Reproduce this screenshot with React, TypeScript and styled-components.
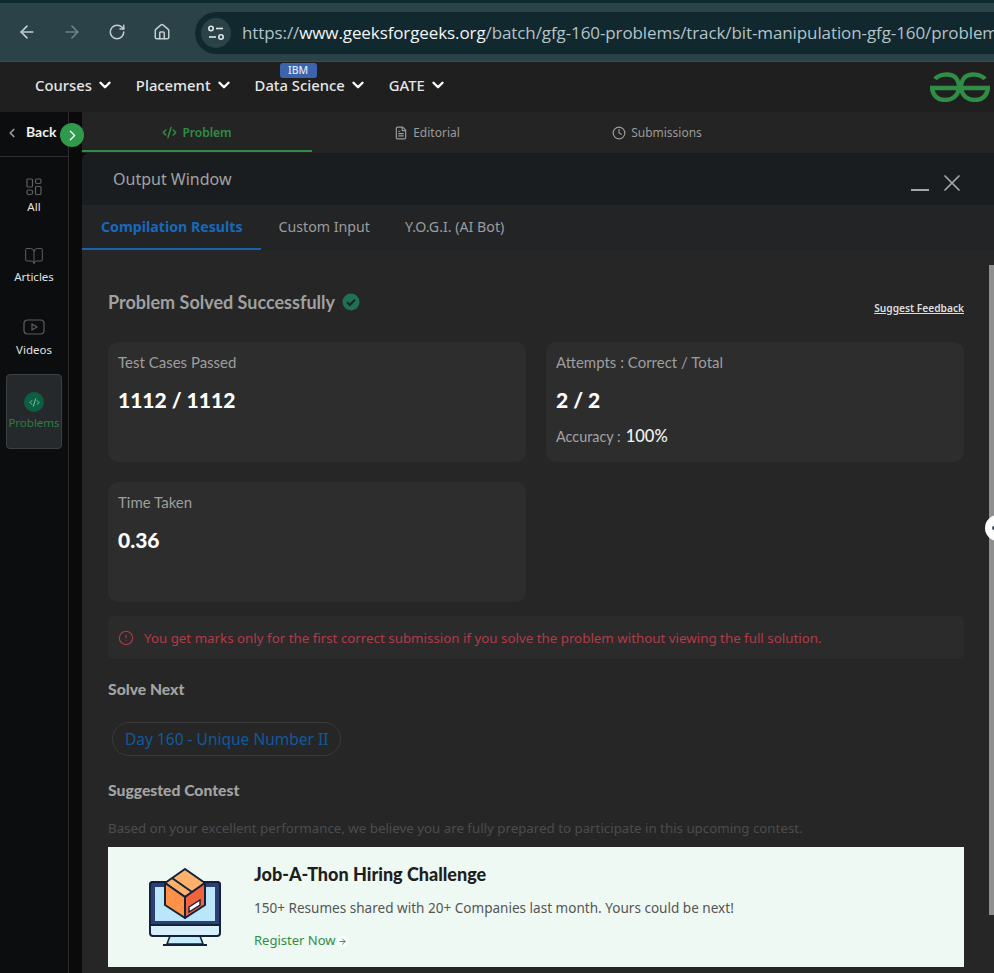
import React from 'react';
import styled, { createGlobalStyle } from 'styled-components';
import { ArrowLeft, ArrowRight, RotateCw, House, ChevronDown, ChevronLeft, ChevronRight, CodeXml, FileText, Clock, X, CircleAlert, BookOpen } from 'lucide-react';

const GlobalStyle = createGlobalStyle`
    html, body {
        margin: 0;
        padding: 0;
        background: #0a0c0d;
    }
    * {
        box-sizing: border-box;
    }
`;

const BODY_FONT = '"Noto Sans", "Open Sans", sans-serif';
const HEAD_FONT = 'Lato, "Noto Sans", sans-serif';

const Page = styled.div`
    position: relative;
    width: 994px;
    height: 973px;
    overflow: hidden;
    display: flex;
    flex-direction: column;
    font-family: ${BODY_FONT};
`;

const BrowserBar = styled.div`
    height: 62px;
    flex: none;
    display: flex;
    align-items: center;
    padding-left: 17px;
    background: #2c4249;
    border-top: 3px solid #0f2a30;
    border-bottom: 1px solid #3b4a4e;
`;

const BrowserButton = styled.span<{ $dim?: boolean; $gap: number }>`
    display: flex;
    margin-right: ${(p) => p.$gap}px;
    color: ${(p) => (p.$dim ? '#6d8086' : '#c2ced1')};
`;

const AddressBar = styled.div`
    flex: 1;
    min-width: 0;
    height: 42px;
    margin-top: 1px;
    display: flex;
    align-items: center;
    gap: 11px;
    padding-left: 6px;
    background: #11282f;
    border-radius: 21px 0 0 21px;
`;

const SiteInfo = styled.span`
    width: 30px;
    height: 30px;
    flex: none;
    display: flex;
    align-items: center;
    justify-content: center;
    border-radius: 50%;
    background: #2c4249;
`;

const Url = styled.div`
    white-space: nowrap;
    overflow: hidden;
    font-size: 17px;
    color: #b4c3c7;
    font-family: "Open Sans", ${BODY_FONT};
    letter-spacing: -0.1px;
    b {
        font-weight: 400;
        color: #f1f5f6;
    }
`;

const NavBar = styled.nav`
    height: 50px;
    flex: none;
    display: flex;
    align-items: center;
    justify-content: space-between;
    padding: 0 4px 0 35px;
    background: #1f1f1f;
`;

const NavList = styled.div`
    display: flex;
    gap: 22px;
    padding-bottom: 5px;
`;

const NavItem = styled.div`
    position: relative;
    display: flex;
    align-items: center;
    gap: 4px;
    font-size: 14.8px;
    font-weight: 500;
    color: #e6e6e6;
`;

const NavBadge = styled.span`
    position: absolute;
    top: -12px;
    left: 25px;
    width: 37px;
    height: 15px;
    border-radius: 3px;
    background: #3e63ad;
    color: #dfe7f5;
    font-size: 10.5px;
    line-height: 15px;
    text-align: center;
`;

const Body = styled.div`
    flex: 1;
    min-height: 0;
    display: flex;
    background: #0a0a0a;
`;

const Sidebar = styled.aside`
    position: relative;
    width: 69px;
    flex: none;
    margin-right: 13px;
    display: flex;
    flex-direction: column;
    align-items: center;
    background: #0b0d0e;
    border-right: 1px solid #2b2d2e;
`;

const BackRow = styled.div`
    width: 100%;
    height: 45px;
    display: flex;
    align-items: center;
    padding: 0 0 5px 5px;
    gap: 7px;
    border-bottom: 1px solid #2b2d2e;
    color: #f0f0f0;
    font-size: 14px;
    font-weight: 700;
    font-family: ${HEAD_FONT};
    svg {
        color: #9a9a9a;
        margin-top: 3px;
    }
`;

const ExpandButton = styled.span`
    position: absolute;
    top: 11px;
    left: 60px;
    width: 24px;
    height: 24px;
    display: flex;
    align-items: center;
    justify-content: center;
    border-radius: 50%;
    background: #2f9a4c;
    color: #f4fff7;
`;

const SideItem = styled.div<{ $top: number; $gap?: number }>`
    width: 56px;
    margin-top: ${(p) => p.$top}px;
    display: flex;
    flex-direction: column;
    align-items: center;
    gap: ${(p) => p.$gap ?? 3}px;
    font-size: 11.5px;
    line-height: 16px;
    color: #e2e2e2;
    svg {
        color: #5c5f61;
    }
`;

const ActiveSideItem = styled(SideItem)`
    height: 75px;
    justify-content: flex-end;
    padding-bottom: 17px;
    color: #2f7d46;
    background: #26292b;
    border: 1px solid #3d4042;
    border-radius: 4px;
`;

const ProblemBadge = styled.span`
    width: 20px;
    height: 20px;
    display: flex;
    align-items: center;
    justify-content: center;
    border-radius: 50%;
    background: #0d5f44;
    svg {
        color: #7fd0ac;
    }
`;

const Main = styled.main`
    flex: 1;
    min-width: 0;
    display: flex;
    flex-direction: column;
`;

const ProblemTabs = styled.div`
    height: 41px;
    flex: none;
    display: flex;
    background: #242424;
`;

const ProblemTab = styled.div<{ $active?: boolean }>`
    width: 230px;
    height: 40px;
    display: flex;
    align-items: center;
    justify-content: center;
    gap: 5px;
    padding-top: 3px;
    font-size: 12px;
    font-weight: ${(p) => (p.$active ? 600 : 400)};
    color: ${(p) => (p.$active ? '#2f8d46' : '#9b9b9b')};
    border-bottom: 2px solid ${(p) => (p.$active ? '#2f8d46' : 'transparent')};
`;

const OutputWindow = styled.section`
    flex: 1;
    min-height: 0;
    display: flex;
    flex-direction: column;
    background: #262626;
    border-radius: 8px 0 0 0;
    overflow: hidden;
`;

const WindowHeader = styled.header`
    height: 52px;
    flex: none;
    display: flex;
    align-items: center;
    justify-content: space-between;
    padding: 0 28px 0 31px;
    background: #1a1d1f;
    color: #a3a3a3;
    font-size: 16px;
`;

const WindowActions = styled.div`
    display: flex;
    align-items: center;
    gap: 9px;
    color: #a5a5a5;
    svg {
        margin-top: 8px;
    }
`;

const MinimizeBar = styled.span`
    width: 18px;
    height: 2px;
    margin-top: 22px;
    background: #a5a5a5;
`;

const OutputTabs = styled.div`
    height: 45px;
    flex: none;
    display: flex;
    background: #232425;
`;

const OutputTab = styled.div<{ $active?: boolean }>`
    height: 45px;
    display: flex;
    align-items: center;
    padding: 0 ${(p) => (p.$active ? '18px' : '17px')} 0 ${(p) => (p.$active ? '19px' : '18px')};
    font-size: 14.2px;
    font-weight: ${(p) => (p.$active ? 700 : 400)};
    color: ${(p) => (p.$active ? '#1669bd' : '#9c9c9c')};
    border-bottom: 2px solid ${(p) => (p.$active ? '#1a62ad' : 'transparent')};
`;

const Content = styled.div`
    display: flex;
    flex-direction: column;
    padding: 39px 30px 0 26px;
`;

const ResultRow = styled.div`
    height: 26px;
    display: flex;
    align-items: center;
    justify-content: space-between;
`;

const ResultTitle = styled.h2`
    margin: 0;
    display: flex;
    align-items: center;
    gap: 7px;
    font-family: ${HEAD_FONT};
    font-size: 18px;
    font-weight: 700;
    color: #a0a0a0;
`;

const FeedbackLink = styled.a`
    margin-top: 11px;
    font-size: 10.2px;
    font-weight: 600;
    color: #dedede;
    text-decoration: underline;
`;

const CardGrid = styled.div`
    margin-top: 27px;
    display: grid;
    grid-template-columns: 418px 418px;
    grid-auto-rows: 120px;
    gap: 20px;
`;

const Card = styled.div`
    padding: 10px;
    background: #2d2d2d;
    border-radius: 10px;
`;

const CardLabel = styled.div`
    font-family: ${HEAD_FONT};
    font-size: 15px;
    line-height: 20px;
    color: #9e9e9e;
`;

const CardValue = styled.div`
    margin-top: 15px;
    font-family: ${HEAD_FONT};
    font-size: 21px;
    line-height: 26px;
    font-weight: 900;
    color: #fff;
`;

const AccuracyRow = styled.div`
    margin-top: 13px;
    display: flex;
    align-items: center;
    gap: 5px;
    font-family: ${HEAD_FONT};
    font-size: 14.4px;
    color: #a3a3a3;
    b {
        font-size: 16.5px;
        font-weight: 500;
        color: #f2f2f2;
    }
`;

const Notice = styled.div`
    height: 43px;
    margin-top: 14px;
    display: flex;
    align-items: center;
    gap: 10px;
    padding-left: 10px;
    background: #2b2b2b;
    border-radius: 6px;
    color: #b33a48;
    font-size: 13.33px;
`;

const SectionTitle = styled.h3<{ $top: number }>`
    margin: ${(p) => p.$top}px 0 0;
    font-family: ${HEAD_FONT};
    font-size: 15.7px;
    line-height: 20px;
    font-weight: 900;
    color: #a3a3a3;
`;

const NextPill = styled.a`
    align-self: flex-start;
    height: 34px;
    margin: 23px 0 0 4px;
    display: flex;
    align-items: center;
    padding: 0 12px;
    border: 1px solid #3a3a3a;
    border-radius: 17px;
    color: #0f5a9e;
    font-size: 15.5px;
`;

const ContestHint = styled.p`
    margin: 20px 0 0;
    font-size: 13.3px;
    line-height: 16px;
    color: #4c4c4c;
`;

const Banner = styled.div`
    height: 120px;
    margin-top: 11px;
    display: flex;
    align-items: center;
    padding-left: 40px;
    gap: 32px;
    background: #eff9f4;
`;

const BannerText = styled.div`
    display: flex;
    flex-direction: column;
    padding-bottom: 3px;
`;

const BannerTitle = styled.div`
    font-family: ${HEAD_FONT};
    font-size: 18px;
    line-height: 24px;
    font-weight: 900;
    color: #1e1e1e;
`;

const BannerBody = styled.div`
    margin-top: 13px;
    font-size: 13.56px;
    line-height: 18px;
    color: #555;
`;

const RegisterLink = styled.a`
    margin-top: 14px;
    display: flex;
    align-items: center;
    gap: 2px;
    font-size: 13px;
    line-height: 18px;
    color: #2f8d46;
`;

const ArrowDot = styled.span`
    width: 11px;
    height: 11px;
    margin-top: 2px;
    display: flex;
    align-items: center;
    justify-content: center;
    border-radius: 50%;
    background: #fff;
    color: #2f8d46;
`;

const ScrollThumb = styled.div`
    position: absolute;
    top: 265px;
    right: 0;
    width: 5px;
    height: 650px;
    background: #8f8f8f;
`;

const ResizeHandle = styled.div`
    position: absolute;
    top: 515px;
    left: 985px;
    width: 26px;
    height: 26px;
    border-radius: 50%;
    background: #fff;
    &::after {
        content: '';
        position: absolute;
        top: 11px;
        left: 7px;
        width: 4px;
        height: 4px;
        border-radius: 50%;
        background: #3b4a5a;
    }
`;

const navItems = ['Courses', 'Placement', 'Data Science', 'GATE'];

function SiteInfoIcon() {
    return (
        <svg width="18" height="16" viewBox="0 0 18 16" fill="none" stroke="#dfe7e9" strokeWidth="1.6">
            <circle cx="4" cy="3.5" r="2.2" />
            <path d="M9 3.5h7" />
            <path d="M2 12h7" />
            <circle cx="14" cy="12" r="2.2" />
        </svg>
    );
}

function GfgLogo() {
    return (
        <svg width="60" height="30" viewBox="930 72 60 30" fill="none" stroke="#2f8d46" strokeWidth="4.4">
            <path d="M935 79C939 74 950 73 955 77C958 80 959 84 959 88L932 88C933 96 938 100 945 100C952 100 958 96 959 88" />
            <path d="M985 79C981 74 970 73 965 77C962 80 961 84 961 88L988 88C987 96 982 100 975 100C968 100 962 96 961 88" />
        </svg>
    );
}

function AllIcon() {
    return (
        <svg width="16" height="18" viewBox="0 0 16 18" fill="none" stroke="currentColor" strokeWidth="1.2">
            <rect x="1" y="1" width="5.5" height="8" rx="1" />
            <rect x="9.5" y="1" width="5.5" height="4.5" rx="1.5" />
            <rect x="1" y="12" width="5.5" height="4.5" rx="1.5" />
            <rect x="9.5" y="8.5" width="5.5" height="8" rx="1" />
        </svg>
    );
}

function VideoIcon() {
    return (
        <svg width="22" height="16" viewBox="0 0 22 16" fill="none" stroke="currentColor" strokeWidth="1.2">
            <rect x="1" y="1" width="20" height="14" rx="3.5" />
            <path d="M9 5l5 3-5 3z" />
        </svg>
    );
}

function SolvedIcon() {
    return (
        <svg width="18" height="18" viewBox="0 0 18 18">
            <circle cx="9" cy="9" r="8.5" fill="#226f58" />
            <path d="M5 9.2l2.8 2.8L13 6.6" fill="none" stroke="#15251f" strokeWidth="2" />
        </svg>
    );
}

function MonitorBox() {
    return (
        <svg width="74" height="78" viewBox="148 868 74 78">
            <path d="M170 936h30l3 8h-36z" fill="#c5ecfb" stroke="#14213a" strokeWidth="1.6" />
            <path d="M163 945h44" stroke="#14213a" strokeWidth="2" />
            <rect x="150" y="882" width="70" height="54" rx="3" fill="#d6eff9" stroke="#14213a" strokeWidth="2" />
            <path d="M150 885a3 3 0 0 1 3-3h64a3 3 0 0 1 3 3v40h-70z" fill="#2b3f74" stroke="#14213a" strokeWidth="2" />
            <rect x="155" y="887" width="60" height="34" fill="#b9e6fb" />
            <path d="M165 883l20-14 20 14-20 14z" fill="#ffb06a" stroke="#14213a" strokeWidth="2" strokeLinejoin="round" />
            <path d="M165 883v22l20 13v-21z" fill="#ff9148" stroke="#14213a" strokeWidth="2" strokeLinejoin="round" />
            <path d="M205 883v22l-20 13v-21z" fill="#f0633c" stroke="#14213a" strokeWidth="2" strokeLinejoin="round" />
            <path d="M172 878l20 14" stroke="#14213a" strokeWidth="2" />
            <path d="M189 907l11-7v5l-11 7z" fill="#fff" stroke="#14213a" strokeWidth="1.4" />
        </svg>
    );
}

export default function App() {
    return (
        <Page>
            <GlobalStyle />
            <BrowserBar>
                <BrowserButton $gap={25}><ArrowLeft size={20} /></BrowserButton>
                <BrowserButton $dim $gap={26}><ArrowRight size={20} /></BrowserButton>
                <BrowserButton $gap={27}><RotateCw size={18} /></BrowserButton>
                <BrowserButton $gap={24}><House size={18} /></BrowserButton>
                <AddressBar>
                    <SiteInfo><SiteInfoIcon /></SiteInfo>
                    <Url>https://<b>www.geeksforgeeks.org</b>/batch/gfg-160-problems/track/bit-manipulation-gfg-160/problem</Url>
                </AddressBar>
            </BrowserBar>
            <NavBar>
                <NavList>
                    {navItems.map((item) => (
                        <NavItem key={item}>
                            {item === 'Data Science' && <NavBadge>IBM</NavBadge>}
                            {item}
                            <ChevronDown size={18} strokeWidth={3.2} color="#fff" />
                        </NavItem>
                    ))}
                </NavList>
                <GfgLogo />
            </NavBar>
            <Body>
                <Sidebar>
                    <BackRow>
                        <ChevronLeft size={14} strokeWidth={3} />
                        Back
                    </BackRow>
                    <ExpandButton><ChevronRight size={17} /></ExpandButton>
                    <SideItem $top={21}><AllIcon />All</SideItem>
                    <SideItem $top={31}><BookOpen size={20} strokeWidth={1.2} />Articles</SideItem>
                    <SideItem $top={34} $gap={7}><VideoIcon />Videos</SideItem>
                    <ActiveSideItem $top={16}>
                        <ProblemBadge><CodeXml size={11} /></ProblemBadge>
                        Problems
                    </ActiveSideItem>
                </Sidebar>
                <Main>
                    <ProblemTabs>
                        <ProblemTab $active><CodeXml size={15} strokeWidth={2.4} />Problem</ProblemTab>
                        <ProblemTab><FileText size={14} />Editorial</ProblemTab>
                        <ProblemTab><Clock size={14} />Submissions</ProblemTab>
                    </ProblemTabs>
                    <OutputWindow>
                        <WindowHeader>
                            Output Window
                            <WindowActions>
                                <MinimizeBar />
                                <X size={28} strokeWidth={1.5} />
                            </WindowActions>
                        </WindowHeader>
                        <OutputTabs>
                            <OutputTab $active>Compilation Results</OutputTab>
                            <OutputTab>Custom Input</OutputTab>
                            <OutputTab>Y.O.G.I. (AI Bot)</OutputTab>
                        </OutputTabs>
                        <Content>
                            <ResultRow>
                                <ResultTitle>Problem Solved Successfully <SolvedIcon /></ResultTitle>
                                <FeedbackLink>Suggest Feedback</FeedbackLink>
                            </ResultRow>
                            <CardGrid>
                                <Card>
                                    <CardLabel>Test Cases Passed</CardLabel>
                                    <CardValue>1112 / 1112</CardValue>
                                </Card>
                                <Card>
                                    <CardLabel>Attempts : Correct / Total</CardLabel>
                                    <CardValue>2 / 2</CardValue>
                                    <AccuracyRow>Accuracy : <b>100%</b></AccuracyRow>
                                </Card>
                                <Card>
                                    <CardLabel>Time Taken</CardLabel>
                                    <CardValue>0.36</CardValue>
                                </Card>
                            </CardGrid>
                            <Notice>
                                <CircleAlert size={16} strokeWidth={1.6} />
                                You get marks only for the first correct submission if you solve the problem without viewing the full solution.
                            </Notice>
                            <SectionTitle $top={20}>Solve Next</SectionTitle>
                            <NextPill>Day 160 - Unique Number II</NextPill>
                            <SectionTitle $top={24}>Suggested Contest</SectionTitle>
                            <ContestHint>Based on your excellent performance, we believe you are fully prepared to participate in this upcoming contest.</ContestHint>
                            <Banner>
                                <MonitorBox />
                                <BannerText>
                                    <BannerTitle>Job-A-Thon Hiring Challenge</BannerTitle>
                                    <BannerBody>150+ Resumes shared with 20+ Companies last month. Yours could be next!</BannerBody>
                                    <RegisterLink>
                                        Register Now
                                        <ArrowDot><ArrowRight size={9} strokeWidth={2.5} /></ArrowDot>
                                    </RegisterLink>
                                </BannerText>
                            </Banner>
                        </Content>
                    </OutputWindow>
                </Main>
            </Body>
            <ScrollThumb />
            <ResizeHandle />
        </Page>
    );
}
